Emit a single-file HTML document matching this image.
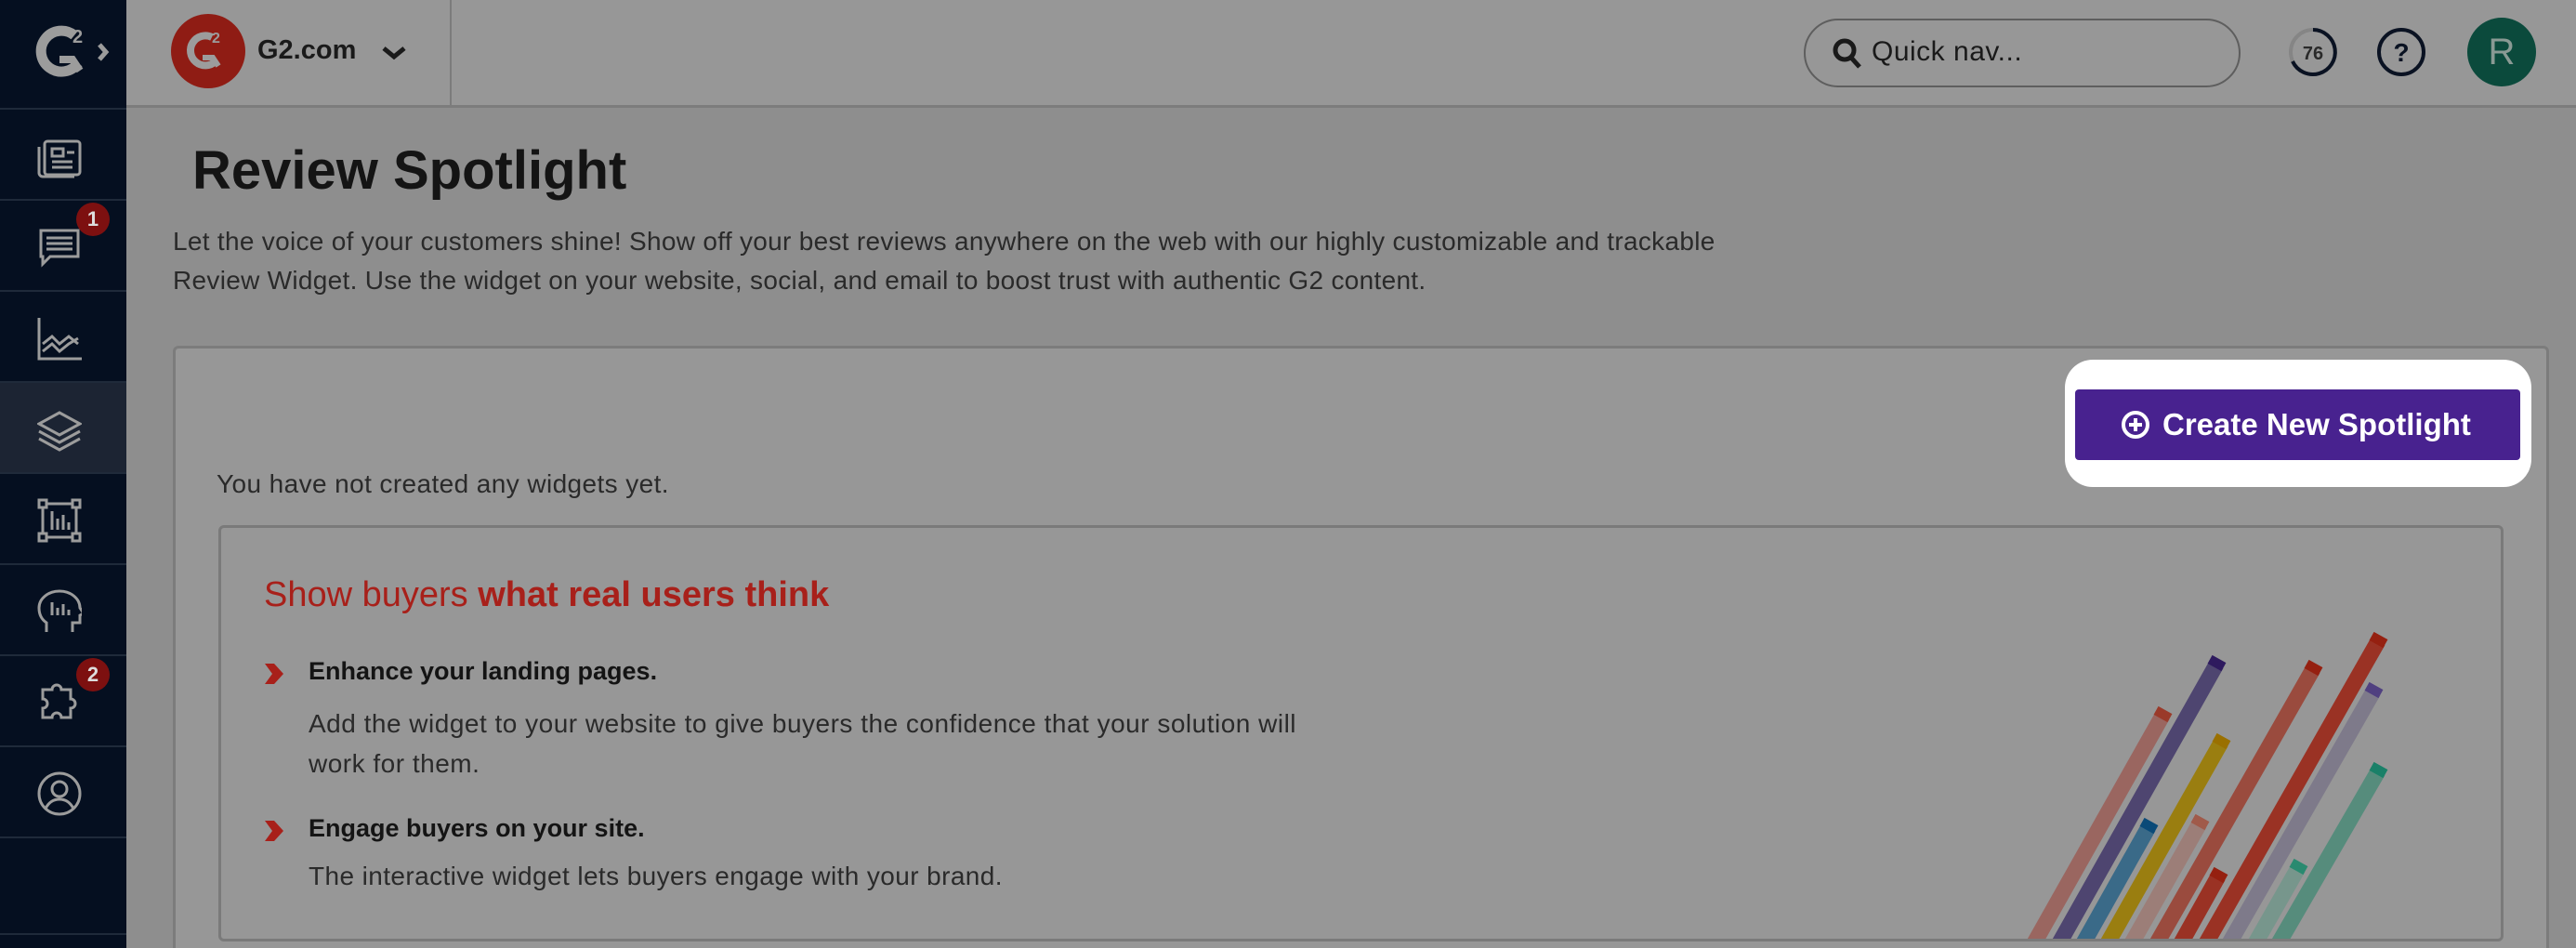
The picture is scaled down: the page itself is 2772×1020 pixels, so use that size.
<!DOCTYPE html>
<html style="overflow:hidden;width:2772px;height:1020px"><head><meta charset="utf-8"><style>
*{box-sizing:border-box;margin:0;padding:0}
body{width:2772px;height:1020px;overflow:hidden;background:#8e8e8e;font-family:"Liberation Sans",sans-serif;color:#1a1a1a;position:relative}
.side{position:absolute;left:0;top:0;width:136px;height:1020px;background:#050f20}
.row{position:absolute;left:0;width:136px;height:98px;border-top:2px solid #1f2a3a}
.row svg{position:absolute;left:40px;top:26px}
.badge{position:absolute;left:82px;width:36px;height:36px;border-radius:50%;background:#7d1010;color:#ddd;font-size:22px;font-weight:bold;text-align:center;line-height:36px}
.head{position:absolute;left:136px;top:0;right:0;height:116px;background:#979797;border-bottom:3px solid #7c7c7c}
.abs{position:absolute}
p.d{position:absolute;left:186px;font-size:28px;letter-spacing:0.3px;color:#2a2a2a;white-space:nowrap}
</style></head><body>
<div class="side">
  <svg class="abs" style="left:34px;top:24px" width="90" height="66" viewBox="0 0 90 66">
    <path d="M46 14 A22 22 0 1 0 50 44" fill="none" stroke="#9c9c9c" stroke-width="11"/>
    <path d="M30 40 L44 40 L52 52" fill="none" stroke="#9c9c9c" stroke-width="8"/>
    <text x="44" y="22" font-size="20" font-weight="bold" fill="#9c9c9c" font-family="Liberation Sans">2</text>
    <path d="M73 24 L80 32 L73 40" fill="none" stroke="#9c9c9c" stroke-width="5"/>
  </svg>
  <div class="row" style="top:116px"><svg width="48" height="48" viewBox="0 0 48 48" fill="none" stroke="#9c9c9c" stroke-width="3"><rect x="8" y="8" width="38" height="36" rx="3"/><path d="M2 14v28a4 4 0 0 0 4 4h34"/><rect x="16" y="16" width="12" height="8"/><path d="M16 30h22M16 36h22M32 20h8"/></svg></div>
  <div class="row" style="top:214px"><svg width="48" height="48" viewBox="0 0 48 48" fill="none" stroke="#9c9c9c" stroke-width="3"><path d="M4 6h40v28H14l-8 8v-8H4z"/><path d="M10 14h28M10 20h28M10 26h28"/></svg><div class="badge" style="top:2px">1</div></div>
  <div class="row" style="top:312px"><svg width="48" height="48" viewBox="0 0 48 48" fill="none" stroke="#9c9c9c" stroke-width="3"><path d="M2 2v44h46"/><path d="M6 30l10-8 8 8 10-8 10 8M6 38l10-8 8 8 10-8 10-6"/></svg></div>
  <div class="row" style="top:410px;background:#1c2433"><svg width="48" height="48" viewBox="0 0 48 48" fill="none" stroke="#9c9c9c" stroke-width="3"><path d="M24 6L2 18l22 12 22-12z"/><path d="M2 26l22 12 22-12M2 34l22 12 22-12"/></svg></div>
  <div class="row" style="top:508px"><svg width="48" height="48" viewBox="0 0 48 48" fill="none" stroke="#9c9c9c" stroke-width="3"><rect x="6" y="6" width="36" height="36"/><rect x="2" y="2" width="8" height="8" fill="#050f20"/><rect x="38" y="2" width="8" height="8" fill="#050f20"/><rect x="2" y="38" width="8" height="8" fill="#050f20"/><rect x="38" y="38" width="8" height="8" fill="#050f20"/><path d="M16 14v20M22 22v12M28 18v16M34 26v8"/></svg></div>
  <div class="row" style="top:606px"><svg width="48" height="48" viewBox="0 0 48 48" fill="none" stroke="#9c9c9c" stroke-width="3"><path d="M10 46V36C4 32 2 26 2 20 2 10 12 2 24 2s22 8 22 18l4 6-4 2v8h-8v10"/><path d="M16 14v14M22 20v8M28 16v12M34 22v6"/></svg></div>
  <div class="row" style="top:704px"><svg width="48" height="48" viewBox="0 0 48 48" fill="none" stroke="#9c9c9c" stroke-width="3"><path d="M6 10h10a5 5 0 0 1 10 0h10v10a5 5 0 0 1 0 10v10H26a5 5 0 0 0-10 0H6V30a5 5 0 0 0 0-10z"/></svg><div class="badge" style="top:2px">2</div></div>
  <div class="row" style="top:802px"><svg width="48" height="48" viewBox="0 0 48 48" fill="none" stroke="#9c9c9c" stroke-width="3"><circle cx="24" cy="24" r="22"/><circle cx="24" cy="19" r="8"/><path d="M9 40c4-8 10-10 15-10s11 2 15 10"/></svg></div>
  <div class="row" style="top:900px;height:106px;border-bottom:2px solid #1f2a3a"></div>
</div>

<div class="head">
  <div class="abs" style="left:48px;top:15px;width:80px;height:80px;border-radius:50%;background:#8f1c14"></div>
  <svg class="abs" style="left:62px;top:28px" width="56" height="56" viewBox="0 0 56 56"><path d="M30 12A16 16 0 1 0 34 38" fill="none" stroke="#9c9c9c" stroke-width="8"/><path d="M20 34h11l6 9" fill="none" stroke="#9c9c9c" stroke-width="6"/><text x="30" y="18" font-size="16" font-weight="bold" fill="#9c9c9c" font-family="Liberation Sans">2</text></svg>
  <div class="abs" style="left:141px;top:38px;font-size:29px;font-weight:bold;color:#1a1a1a">G2.com</div>
  <svg class="abs" style="left:275px;top:50px" width="26" height="16" viewBox="0 0 26 16"><path d="M2 2l11 9 11-9" fill="none" stroke="#1a1a1a" stroke-width="5"/></svg>
  <div class="abs" style="left:348px;top:0;width:2px;height:113px;background:#7c7c7c"></div>
  <div class="abs" style="left:1805px;top:20px;width:470px;height:74px;border:2px solid #5e5e5e;border-radius:37px"></div>
  <svg class="abs" style="left:1835px;top:40px" width="34" height="36" viewBox="0 0 34 36"><circle cx="14" cy="14" r="10" fill="none" stroke="#1a1a1a" stroke-width="5"/><path d="M21 22l9 10" stroke="#1a1a1a" stroke-width="5"/></svg>
  <div class="abs" style="left:1878px;top:39px;font-size:30px;color:#1a1a1a;letter-spacing:0.5px">Quick nav...</div>
  <svg class="abs" style="left:2325px;top:28px" width="56" height="56" viewBox="0 0 56 56"><circle cx="28" cy="28" r="24" fill="none" stroke="#858585" stroke-width="4"/><path d="M28 4A24 24 0 1 1 6 38" fill="none" stroke="#0a1222" stroke-width="4"/><text x="28" y="36" text-anchor="middle" font-size="20" font-weight="bold" fill="#2a2a2a" font-family="Liberation Sans">76</text></svg>
  <svg class="abs" style="left:2420px;top:28px" width="56" height="56" viewBox="0 0 56 56"><circle cx="28" cy="28" r="24" fill="none" stroke="#0a1222" stroke-width="4"/><text x="28" y="38" text-anchor="middle" font-size="28" font-weight="bold" fill="#0a1222" font-family="Liberation Sans">?</text></svg>
  <div class="abs" style="left:2519px;top:19px;width:74px;height:74px;border-radius:50%;background:#0b4a3c;color:#8a9a94;font-size:40px;text-align:center;line-height:74px">R</div>
</div>

<div class="abs" style="left:207px;top:150px;font-size:58px;font-weight:bold;color:#141414">Review Spotlight</div>
<p class="d" style="top:244px">Let the voice of your customers shine! Show off your best reviews anywhere on the web with our highly customizable and trackable</p>
<p class="d" style="top:286px">Review Widget. Use the widget on your website, social, and email to boost trust with authentic G2 content.</p>

<div class="abs" style="left:186px;top:372px;width:2557px;height:680px;background:#979797;border:3px solid #7c7c7c;border-radius:6px"></div>
<div class="abs" style="left:2222px;top:387px;width:502px;height:137px;background:#fff;border-radius:30px"></div>
<div class="abs" style="left:2233px;top:419px;width:479px;height:76px;background:#48228f;border-radius:4px;color:#fff;font-size:33px;font-weight:bold;line-height:76px;padding-left:94px">Create New Spotlight</div>
<svg class="abs" style="left:2282px;top:441px" width="32" height="32" viewBox="0 0 32 32"><circle cx="16" cy="16" r="13" fill="none" stroke="#fff" stroke-width="4"/><path d="M16 9v14M9 16h14" stroke="#fff" stroke-width="4"/></svg>
<div class="abs" style="left:233px;top:505px;font-size:28px;letter-spacing:0.4px;color:#2a2a2a">You have not created any widgets yet.</div>

<div class="abs" style="left:235px;top:565px;width:2459px;height:448px;border:3px solid #7a7a7a;border-radius:6px;overflow:hidden">
<svg width="2459" height="448" viewBox="235 565 2459 448" style="position:absolute;left:-3px;top:-3px">
<g stroke-width="17" stroke-linecap="butt">
<line x1="2327" y1="770" x2="2186" y2="1020" stroke="#9a6660"/>
<line x1="2385" y1="715" x2="2213" y2="1020" stroke="#4e4570"/>
<line x1="2312" y1="890" x2="2239" y2="1020" stroke="#3a6a88"/>
<line x1="2390" y1="799" x2="2265" y2="1020" stroke="#9a7e10"/>
<line x1="2367" y1="886" x2="2291" y2="1020" stroke="#9c7e78"/>
<line x1="2489" y1="720" x2="2318" y2="1020" stroke="#9a4b3e"/>
<line x1="2387" y1="943" x2="2344" y2="1020" stroke="#9a3224"/>
<line x1="2559" y1="690" x2="2371" y2="1020" stroke="#9a3224"/>
<line x1="2554" y1="744" x2="2396" y2="1020" stroke="#7e7a8a"/>
<line x1="2473" y1="934" x2="2424" y2="1020" stroke="#77968c"/>
<line x1="2559" y1="830" x2="2449" y2="1020" stroke="#568c7c"/>
</g>
<g stroke-width="17">
<line x1="2330" y1="764" x2="2325" y2="773" stroke="#9a3a2a"/>
<line x1="2388" y1="709" x2="2383" y2="718" stroke="#2e1a5e"/>
<line x1="2315" y1="884" x2="2310" y2="893" stroke="#0a4a78"/>
<line x1="2393" y1="793" x2="2388" y2="802" stroke="#9a7000"/>
<line x1="2370" y1="880" x2="2365" y2="889" stroke="#a05a4a"/>
<line x1="2492" y1="714" x2="2487" y2="723" stroke="#952010"/>
<line x1="2390" y1="937" x2="2385" y2="946" stroke="#952010"/>
<line x1="2562" y1="684" x2="2557" y2="693" stroke="#952010"/>
<line x1="2557" y1="738" x2="2552" y2="747" stroke="#504080"/>
<line x1="2476" y1="928" x2="2471" y2="937" stroke="#2a8a70"/>
<line x1="2562" y1="824" x2="2557" y2="833" stroke="#1a8068"/>
</g>
</svg>
</div>

<div class="abs" style="left:284px;top:619px;font-size:38px;color:#a8201a">Show buyers <b>what real users think</b></div>
<svg class="abs" style="left:285px;top:714px" width="22" height="22" viewBox="0 0 22 22"><path d="M0 0h10l10 11-10 11H0l8-11z" fill="#a8201a"/></svg>
<div class="abs" style="left:332px;top:707px;font-size:27px;font-weight:bold;color:#141414">Enhance your landing pages.</div>
<div class="abs" style="left:332px;top:757px;font-size:28px;color:#2a2a2a;letter-spacing:0.5px;line-height:43px">Add the widget to your website to give buyers the confidence that your solution will<br>work for them.</div>
<svg class="abs" style="left:285px;top:883px" width="22" height="22" viewBox="0 0 22 22"><path d="M0 0h10l10 11-10 11H0l8-11z" fill="#a8201a"/></svg>
<div class="abs" style="left:332px;top:876px;font-size:27px;font-weight:bold;color:#141414">Engage buyers on your site.</div>
<div class="abs" style="left:332px;top:927px;font-size:28px;color:#2a2a2a;letter-spacing:0.4px">The interactive widget lets buyers engage with your brand.</div>
</body></html>
